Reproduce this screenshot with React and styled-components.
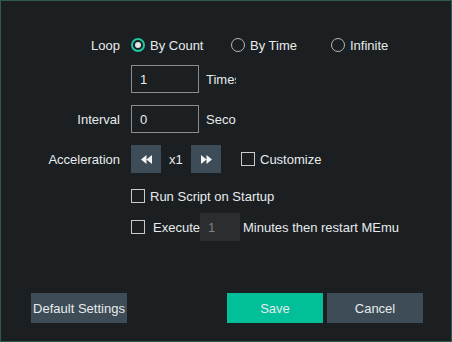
import React from "react";
import styled, { createGlobalStyle } from "styled-components";

const Global = createGlobalStyle`
  html, body { margin: 0; padding: 0; background: #1b1f22; }
  * { box-sizing: border-box; }
`;

const Dialog = styled.div`
  width: 452px;
  height: 342px;
  border: 1px solid #2e5a4b;
  background: #1b1f22;
  color: #e8ebec;
  font-family: "Liberation Sans", Arial, sans-serif;
  font-size: 13px;
  display: flex;
  flex-direction: column;
`;

const Form = styled.div`
  display: flex;
  flex-direction: column;
  padding-top: 34px;
`;

const Row = styled.div`
  display: flex;
  align-items: center;
  height: ${p => p.h || 28}px;
  margin-top: ${p => p.mt || 0}px;
`;

const Label = styled.div`
  width: 119px;
  text-align: right;
  margin-right: 11px;
  white-space: nowrap;
`;

const Options = styled.div`
  display: flex;
  align-items: center;
`;

const RadioOption = styled.label`
  width: 100px;
  display: flex;
  align-items: center;
  gap: 5px;
`;

const RadioDot = styled.span`
  width: 14px;
  height: 14px;
  border-radius: 50%;
  border: ${p => (p.checked ? "2px solid #1fc7a0" : "1.5px solid #b4b8ba")};
  display: flex;
  align-items: center;
  justify-content: center;
  &::after {
    content: "";
    width: 6px;
    height: 6px;
    border-radius: 50%;
    background: ${p => (p.checked ? "#e2e4e5" : "transparent")};
  }
`;

const TextBox = styled.div`
  width: 68px;
  height: 28px;
  border: 1px solid #8a8d8f;
  padding-left: 8px;
  display: flex;
  align-items: center;
`;

const Unit = styled.div`
  width: 30px;
  margin-left: 7px;
  overflow: hidden;
  white-space: nowrap;
`;

const SpeedBtn = styled.div`
  width: 30px;
  height: 28px;
  background: #3d4c56;
  display: flex;
  align-items: center;
  justify-content: center;
`;

const Speed = styled.span`
  width: 30px;
  padding-left: 8px;
`;

const Check = styled.label`
  display: flex;
  align-items: center;
  gap: ${p => p.gap || 5}px;
  margin-left: ${p => p.ml || 0}px;
  width: ${p => (p.w ? `${p.w}px` : "auto")};
  white-space: nowrap;
`;

const Box = styled.span`
  width: 14px;
  height: 14px;
  flex: none;
  border: 1px solid #c8cbcd;
`;

const MiniInput = styled.div`
  width: 40px;
  height: 28px;
  flex: none;
  background: #2a2e31;
  color: #7b7f82;
  padding-left: 8px;
  display: flex;
  align-items: center;
  margin-right: 3px;
`;

const Footer = styled.div`
  margin-top: auto;
  display: flex;
  align-items: center;
  padding: 0 28px 18px 30px;
`;

const Button = styled.div`
  width: 96px;
  height: 30px;
  display: flex;
  align-items: center;
  justify-content: center;
  background: ${p => (p.primary ? "#00bf99" : "#3d4c56")};
  margin-left: ${p => p.ml || 0}px;
  white-space: nowrap;
`;

const Arrows = ({ dir }) => (
  <svg width="11" height="9" viewBox="0 0 11 9">
    {dir === "left" ? (
      <path d="M5.5 0L0 4.5L5.5 9ZM11 0L5.5 4.5L11 9Z" fill="#f2f4f5" />
    ) : (
      <path d="M0 0L5.5 4.5L0 9ZM5.5 0L11 4.5L5.5 9Z" fill="#f2f4f5" />
    )}
  </svg>
);

export default function App() {
  return (
    <>
      <Global />
      <Dialog>
        <Form>
          <Row h={20}>
            <Label>Loop</Label>
            <Options>
              <RadioOption><RadioDot checked />By Count</RadioOption>
              <RadioOption><RadioDot />By Time</RadioOption>
              <RadioOption><RadioDot />Infinite</RadioOption>
            </Options>
          </Row>
          <Row mt={10}>
            <Label />
            <TextBox>1</TextBox>
            <Unit>Times</Unit>
          </Row>
          <Row mt={12}>
            <Label>Interval</Label>
            <TextBox>0</TextBox>
            <Unit>Seconds</Unit>
          </Row>
          <Row mt={12}>
            <Label>Acceleration</Label>
            <SpeedBtn><Arrows dir="left" /></SpeedBtn>
            <Speed>x1</Speed>
            <SpeedBtn><Arrows dir="right" /></SpeedBtn>
            <Check ml={20}><Box />Customize</Check>
          </Row>
          <Row h={20} mt={13}>
            <Label />
            <Check><Box />Run Script on Startup</Check>
          </Row>
          <Row mt={7}>
            <Label />
            <Check gap={8} w={69}><Box />Execute</Check>
            <MiniInput>1</MiniInput>
            <span>Minutes then restart MEmu</span>
          </Row>
        </Form>
        <Footer>
          <Button>Default Settings</Button>
          <Button primary ml={100}>Save</Button>
          <Button ml={4}>Cancel</Button>
        </Footer>
      </Dialog>
    </>
  );
}
